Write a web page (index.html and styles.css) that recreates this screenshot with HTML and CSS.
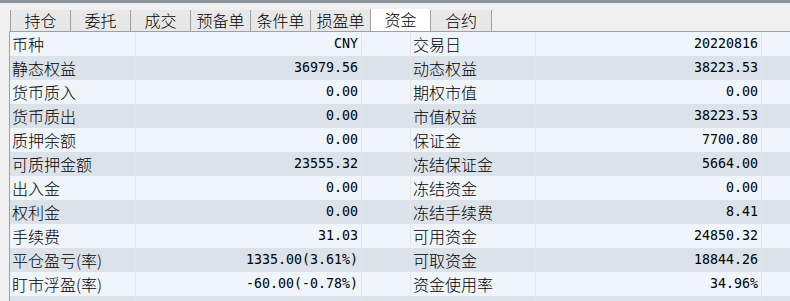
FILE: index.html
```html
<!DOCTYPE html>
<html lang="zh-CN">
<head>
  <meta charset="UTF-8">
  <title>资金</title>
  <link rel="stylesheet" href="styles.css">
</head>
<body>
  <div class="topline"></div>
  <div class="tabs">
    <div class="tab">持仓</div>
    <div class="tab">委托</div>
    <div class="tab">成交</div>
    <div class="tab">预备单</div>
    <div class="tab">条件单</div>
    <div class="tab">损盈单</div>
    <div class="tab active">资金</div>
    <div class="tab last">合约</div>
  </div>
  <div class="table">
    <div class="row">
      <div class="cell label">币种</div><div class="cell num">CNY</div><div class="cell"></div>
      <div class="cell label">交易日</div><div class="cell num">20220816</div><div class="cell end"></div>
    </div>
    <div class="row">
      <div class="cell label">静态权益</div><div class="cell num">36979.56</div><div class="cell"></div>
      <div class="cell label">动态权益</div><div class="cell num">38223.53</div><div class="cell end"></div>
    </div>
    <div class="row">
      <div class="cell label">货币质入</div><div class="cell num">0.00</div><div class="cell"></div>
      <div class="cell label">期权市值</div><div class="cell num">0.00</div><div class="cell end"></div>
    </div>
    <div class="row">
      <div class="cell label">货币质出</div><div class="cell num">0.00</div><div class="cell"></div>
      <div class="cell label">市值权益</div><div class="cell num">38223.53</div><div class="cell end"></div>
    </div>
    <div class="row">
      <div class="cell label">质押余额</div><div class="cell num">0.00</div><div class="cell"></div>
      <div class="cell label">保证金</div><div class="cell num">7700.80</div><div class="cell end"></div>
    </div>
    <div class="row">
      <div class="cell label">可质押金额</div><div class="cell num">23555.32</div><div class="cell"></div>
      <div class="cell label">冻结保证金</div><div class="cell num">5664.00</div><div class="cell end"></div>
    </div>
    <div class="row">
      <div class="cell label">出入金</div><div class="cell num">0.00</div><div class="cell"></div>
      <div class="cell label">冻结资金</div><div class="cell num">0.00</div><div class="cell end"></div>
    </div>
    <div class="row">
      <div class="cell label">权利金</div><div class="cell num">0.00</div><div class="cell"></div>
      <div class="cell label">冻结手续费</div><div class="cell num">8.41</div><div class="cell end"></div>
    </div>
    <div class="row">
      <div class="cell label">手续费</div><div class="cell num">31.03</div><div class="cell"></div>
      <div class="cell label">可用资金</div><div class="cell num">24850.32</div><div class="cell end"></div>
    </div>
    <div class="row">
      <div class="cell label">平仓盈亏(率)</div><div class="cell num">1335.00(3.61%)</div><div class="cell"></div>
      <div class="cell label">可取资金</div><div class="cell num">18844.26</div><div class="cell end"></div>
    </div>
    <div class="row">
      <div class="cell label">盯市浮盈(率)</div><div class="cell num">-60.00(-0.78%)</div><div class="cell"></div>
      <div class="cell label">资金使用率</div><div class="cell num">34.96%</div><div class="cell end"></div>
    </div>
    <div class="row tail">
      <div class="cell"></div><div class="cell"></div><div class="cell"></div>
      <div class="cell"></div><div class="cell"></div><div class="cell end"></div>
    </div>
  </div>
</body>
</html>
```

FILE: styles.css
```css
:root {
  --frame: #f0f0f0;
  --edge: #a0a0a0;
  --tab: #e8e8e8;
  --light: #eff5fb;
  --shade: #dce2ea;
  --grid: #e2e6ea;
}

body {
  margin: 0;
  height: 301px;
  overflow: hidden;
  background-color: var(--frame);
  font-family: "Noto Sans CJK SC", sans-serif;
  font-size: 16px;
  font-weight: 300;
  color: #000;
}

.topline {
  height: 3px;
  background-color: #8b929a;
}

.tabs {
  display: flex;
  align-items: flex-end;
  height: 28px;
  padding-left: 10px;
}

.tab {
  width: 59px;
  height: 21px;
  line-height: 21px;
  text-align: center;
  background-color: var(--tab);
  border-left: 1px solid var(--edge);
}

.tab.active {
  height: 22px;
  background-color: #fff;
}

.tab.last {
  width: 60px;
  border-right: 1px solid var(--edge);
}

.table {
  margin-left: 9px;
  border-top: 1px solid var(--edge);
  border-left: 1px solid var(--edge);
}

.row {
  display: grid;
  grid-template-columns: 126px 226px 49px 125px 226px 1fr;
  height: 24px;
  background-color: var(--light);
}

.row:nth-child(even) {
  background-color: var(--shade);
}

/* only the top few pixels of the next row show in the window */
.row.tail {
  height: 5px;
}

.cell {
  line-height: 24px;
  white-space: nowrap;
  border-right: 1px solid var(--grid);
}

.cell.end {
  border-right: none;
}

.label {
  padding-left: 2px;
}

.num {
  padding-right: 3px;
  text-align: right;
  font-family: "DejaVu Sans Mono", monospace;
  font-size: 13.3px;
  font-weight: normal;
}
```
